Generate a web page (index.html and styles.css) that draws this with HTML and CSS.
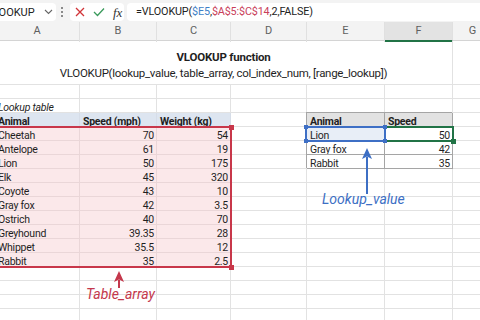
FILE: index.html
```html
<!DOCTYPE html>
<html>
<head>
<meta charset="utf-8">
<link rel="stylesheet" href="styles.css">
</head>
<body>
<div class="app">
  <div class="fbar">
    <div class="namebox">
      <span class="nm">VLOOKUP</span>
      <svg class="chev" width="9" height="6" viewBox="0 0 9 6"><path d="M1 1 L4.5 4.5 L8 1" fill="none" stroke="#666" stroke-width="1.1"/></svg>
    </div>
    <svg class="dots" width="4" height="14" viewBox="0 0 4 14"><circle cx="2" cy="3" r="1" fill="#666"/><circle cx="2" cy="7" r="1" fill="#666"/><circle cx="2" cy="11" r="1" fill="#666"/></svg>
    <div class="fxbox">
      <svg width="10" height="10" viewBox="0 0 10 10"><path d="M1 1 L9 9 M9 1 L1 9" stroke="#d13438" stroke-width="1.3" fill="none"/></svg>
      <svg width="12" height="10" viewBox="0 0 12 10"><path d="M1 5 L4.5 8.5 L11 1.5" stroke="#3a9a5b" stroke-width="1.3" fill="none"/></svg>
      <span class="fx">fx</span>
    </div>
    <div class="formula">=VLOOKUP(<span class="rb">$E5</span>,<span class="rr">$A$5:$C$14</span>,2,FALSE)</div>
  </div>

  <div class="colhead">
    <div class="ch">A</div>
    <div class="ch">B</div>
    <div class="ch">C</div>
    <div class="ch">D</div>
    <div class="ch">E</div>
    <div class="ch sel">F</div>
    <div class="ch">G</div>
  </div>

  <div class="sheet">
    <div class="title"><div class="t1">VLOOKUP function</div><div class="t2">VLOOKUP(lookup_value, table_array, col_index_num, [range_lookup])</div></div>
    <div class="c top"></div>

    <div class="c"></div><div class="c"></div><div class="c"></div><div class="c"></div><div class="c"></div><div class="c"></div><div class="c"></div>

    <div class="c it">Lookup table</div><div class="c"></div><div class="c"></div><div class="c"></div><div class="c"></div><div class="c"></div><div class="c"></div>

    <div class="c h">Animal</div><div class="c h">Speed (mph)</div><div class="c h">Weight (kg)</div><div class="c"></div><div class="c t th">Animal</div><div class="c t th">Speed</div><div class="c"></div>

    <div class="c p">Cheetah</div><div class="c p n">70</div><div class="c p n">54</div><div class="c"></div><div class="c t sf">Lion</div><div class="c t n">50</div><div class="c"></div>
    <div class="c p">Antelope</div><div class="c p n">61</div><div class="c p n">19</div><div class="c"></div><div class="c t">Gray fox</div><div class="c t n">42</div><div class="c"></div>
    <div class="c p">Lion</div><div class="c p n">50</div><div class="c p n">175</div><div class="c"></div><div class="c t">Rabbit</div><div class="c t n">35</div><div class="c"></div>
    <div class="c p">Elk</div><div class="c p n">45</div><div class="c p n">320</div><div class="c"></div><div class="c"></div><div class="c"></div><div class="c"></div>
    <div class="c p">Coyote</div><div class="c p n">43</div><div class="c p n">10</div><div class="c"></div><div class="c"></div><div class="c"></div><div class="c"></div>
    <div class="c p">Gray fox</div><div class="c p n">42</div><div class="c p n">3.5</div><div class="c"></div><div class="c"></div><div class="c"></div><div class="c"></div>
    <div class="c p">Ostrich</div><div class="c p n">40</div><div class="c p n">70</div><div class="c"></div><div class="c"></div><div class="c"></div><div class="c"></div>
    <div class="c p">Greyhound</div><div class="c p n">39.35</div><div class="c p n">28</div><div class="c"></div><div class="c"></div><div class="c"></div><div class="c"></div>
    <div class="c p">Whippet</div><div class="c p n">35.5</div><div class="c p n">12</div><div class="c"></div><div class="c"></div><div class="c"></div><div class="c"></div>
    <div class="c p">Rabbit</div><div class="c p n">35</div><div class="c p n">2.5</div><div class="c"></div><div class="c"></div><div class="c"></div><div class="c"></div>

    <div class="c"></div><div class="c"></div><div class="c"></div><div class="c"></div><div class="c"></div><div class="c"></div><div class="c"></div>
    <div class="c"></div><div class="c"></div><div class="c"></div><div class="c"></div><div class="c"></div><div class="c"></div><div class="c"></div>
    <div class="c"></div><div class="c"></div><div class="c"></div><div class="c"></div><div class="c"></div><div class="c"></div><div class="c"></div>
    <div class="c"></div><div class="c"></div><div class="c"></div><div class="c"></div><div class="c"></div><div class="c"></div><div class="c"></div>

    <div class="range"></div>
    <div class="hdl red r1"></div>
    <div class="hdl red r2"></div>
    <div class="gsel"></div>
    <div class="bsel"></div>
    <div class="hdl blue b1"></div>
    <div class="hdl blue b2"></div>
    <div class="hdl blue b3"></div>
    <div class="hdl blue b4"></div>
    <div class="hdl green g1"></div>

    <svg class="arrow blue-arrow" width="16" height="50" viewBox="0 0 16 50"><path d="M8 1 L13 12 L8 9.5 L3 12 Z" fill="#3d6fc4"/><path d="M8 10 L8 47" stroke="#3d6fc4" stroke-width="2"/></svg>
    <svg class="arrow red-arrow" width="16" height="20" viewBox="0 0 16 20"><path d="M8 1 L13 12 L8 9.5 L3 12 Z" fill="#c4384c"/><path d="M8 10 L8 18" stroke="#c4384c" stroke-width="2"/></svg>
    <div class="label lv">Lookup_value</div>
    <div class="label ta">Table_array</div>
  </div>
</div>
</body>
</html>
```

FILE: styles.css
```css
* { box-sizing: border-box; }
html, body { margin: 0; padding: 0; }
body {
  width: 480px;
  height: 320px;
  overflow: hidden;
  background: #ffffff;
  font-family: Roboto, "Liberation Sans", sans-serif;
  color: #1f1f1f;
}
.app { width: 480px; height: 320px; overflow: hidden; }

.fbar {
  height: 22px;
  background: #f3f3f3;
  display: flex;
  align-items: center;
  padding-top: 2px;
}
.namebox {
  margin-left: -20px;
  width: 76px;
  height: 18px;
  background: #fff;
  border-radius: 4px;
  display: flex;
  align-items: center;
  padding-left: 6px;
  font-size: 11px;
  color: #222;
}
.nm { flex: 1; }
.chev { margin-right: 3px; }
.dots { margin-left: 4px; margin-right: 6px; }
.fxbox {
  width: 54px;
  height: 18px;
  background: #fff;
  border-radius: 4px;
  display: flex;
  align-items: center;
  gap: 8px;
  padding-left: 5px;
}
.fx {
  font-family: "Liberation Serif", serif;
  font-style: italic;
  font-size: 13px;
  color: #333;
  line-height: 1;
}
.formula {
  margin-left: 3px;
  flex: 1;
  height: 18px;
  background: #fff;
  border-radius: 4px 0 0 4px;
  font-size: 10.8px;
  letter-spacing: -0.15px;
  line-height: 18px;
  padding-left: 9px;
  color: #222;
  white-space: nowrap;
}
.rb { color: #3f7fc7; }
.rr { color: #c9405a; }

.colhead, .sheet {
  margin-left: -5px;
  display: grid;
  grid-template-columns: 85px 77px 74px 76px 78px 68px 40px;
}
.colhead {
  height: 19px;
  background: #f3f3f3;
  border-bottom: 1px solid #d4d4d4;
}
.ch {
  font-size: 11px;
  color: #5f5f5f;
  text-align: center;
  line-height: 18px;
  border-right: 1px solid #e0e0e0;
}
.ch.sel {
  background: #e3e3e3;
  border-bottom: 2px solid #217346;
}

.sheet {
  position: relative;
  grid-template-rows: 44px;
  grid-auto-rows: 14px;
}
.title {
  grid-column: span 6;
  border-right: 1px solid #e2e2e2;
  border-bottom: 1px solid #e2e2e2;
  text-align: center;
  padding-top: 8px;
  white-space: nowrap;
}
.t1 { font-weight: bold; font-size: 11.5px; letter-spacing: -0.2px; line-height: 16px; }
.t2 { font-size: 11.5px; letter-spacing: -0.3px; line-height: 16px; }
.c.top { border-bottom: 1px solid #e2e2e2; }

.c {
  border-right: 1px solid #e2e2e2;
  border-bottom: 1px solid #e2e2e2;
  font-size: 10.5px;
  letter-spacing: -0.25px;
  line-height: 13px;
  padding: 2px 3px 0;
  white-space: nowrap;
}
.c.n { text-align: right; padding-right: 2px; }
.c.it { font-style: italic; }
.c.h { background: #dde5f0; font-weight: bold; border-color: #d6dde8; }
.c.p { background: #fbe8ea; border-color: #ead6d8; }
.c.t { border-color: #a5a5a5; box-shadow: -1px -1px 0 #a5a5a5; }
.c.th { background: #e2e2e2; font-weight: bold; }
.c.sf { background: #e8eef7; }

.range {
  position: absolute;
  left: -1px;
  top: 85px;
  width: 238px;
  height: 142px;
  border: 2px solid #c8374a;
}
.hdl { position: absolute; width: 5px; height: 5px; }
.hdl.red { background: #c8374a; }
.r1 { left: 234px; top: 84px; }
.r2 { left: 234px; top: 224px; }
.gsel {
  position: absolute;
  left: 389px;
  top: 85px;
  width: 70px;
  height: 16px;
  border: 2px solid #217346;
}
.bsel {
  position: absolute;
  left: 310px;
  top: 85px;
  width: 81px;
  height: 16px;
  border: 2px solid #3e6fc5;
}
.hdl.blue { background: #3e6fc5; width: 4px; height: 4px; }
.b1 { left: 309px; top: 84px; }
.b2 { left: 309px; top: 98px; }
.b3 { left: 388px; top: 84px; }
.b4 { left: 388px; top: 98px; }
.hdl.green { background: #217346; }
.g1 { left: 456px; top: 98px; }

.arrow { position: absolute; }
.blue-arrow { left: 364px; top: 106px; }
.red-arrow { left: 116px; top: 229px; }
.label {
  position: absolute;
  font-style: italic;
  font-size: 14px;
  line-height: 16px;
  white-space: nowrap;
}
.lv { left: 327px; top: 150px; color: #3d6fc4; }
.ta { left: 91px; top: 245px; color: #c4384c; }
```
